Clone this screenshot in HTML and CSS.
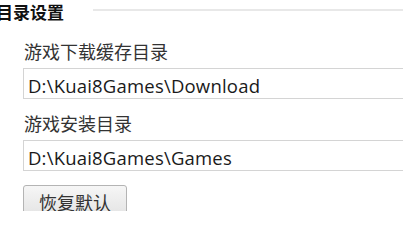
FILE: index.html
```html
<!DOCTYPE html>
<html lang="zh-CN">
<head>
<meta charset="utf-8">
<title>目录设置</title>
<link rel="stylesheet" href="styles.css">
</head>
<body>
<section class="panel">
  <header class="section-header">
    <h2 class="section-title">目录设置</h2>
    <div class="section-rule"></div>
  </header>
  <div class="field">
    <div class="field-label">游戏下载缓存目录</div>
    <div class="path-box">D:\Kuai8Games\Download</div>
  </div>
  <div class="field">
    <div class="field-label">游戏安装目录</div>
    <div class="path-box">D:\Kuai8Games\Games</div>
  </div>
  <div class="actions">
    <button class="btn" type="button">恢复默认</button>
  </div>
</section>
</body>
</html>
```
FILE: styles.css
```css
html, body {
  margin: 0;
  padding: 0;
  width: 403px;
  height: 211px;
  background: #ffffff;
  overflow: hidden;
}
body {
  font-family: "Open Sans", "Noto Sans CJK SC", sans-serif;
  color: #222;
}
.panel {
  width: 440px;
  height: 211px;
  overflow: hidden;
}
.section-header {
  display: flex;
  align-items: flex-start;
  height: 24px;
}
.section-title {
  margin: 0 0 0 -4px;
  font-family: "Noto Sans CJK SC", sans-serif;
  font-size: 17px;
  font-weight: 700;
  line-height: 24px;
  color: #111;
  white-space: nowrap;
}
.section-rule {
  flex: 1;
  height: 2px;
  margin: 9px 0 0 29px;
  background: #e8e8e8;
}
.field {
  padding-left: 23px;
}
.field + .field {
  margin-top: 12px;
}
.field:first-of-type {
  margin-top: 15px;
}
.field-label {
  font-family: "Noto Sans CJK SC", sans-serif;
  font-size: 18px;
  line-height: 24px;
  color: #333;
  margin-bottom: 5px;
  padding-left: 1px;
}
.path-box {
  box-sizing: border-box;
  height: 31px;
  border: 1px solid #d4d4d4;
  padding: 5px 0 0 4px;
  font-size: 18.5px;
  letter-spacing: 0.2px;
  line-height: 24px;
  color: #1a1a1a;
  white-space: nowrap;
  overflow: hidden;
}
.actions {
  padding-left: 23px;
  margin-top: 14px;
}
.btn {
  box-sizing: border-box;
  width: 104px;
  height: 31px;
  border: 1px solid #b4b4b4;
  border-radius: 3px;
  background: linear-gradient(#f6f6f6, #e4e4e4);
  font-family: "Noto Sans CJK SC", sans-serif;
  font-size: 18px;
  line-height: 24px;
  color: #333;
  padding: 3px 0 0;
  letter-spacing: 0;
}
```
